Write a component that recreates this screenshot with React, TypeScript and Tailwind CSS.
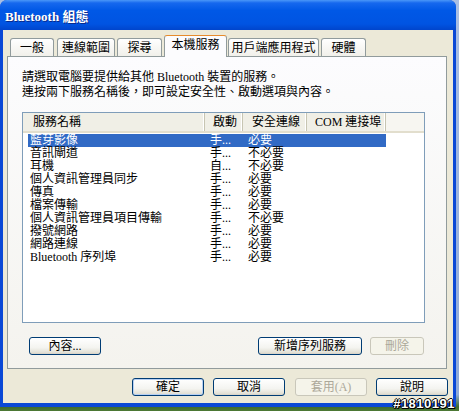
import React from "react";

const TABS = [
  { label: "一般", cls: "ml-[3px] w-[44px]" },
  { label: "連線範圍", cls: "ml-[3px] w-[58px]" },
  { label: "探尋", cls: "ml-[2px] w-[45px]" },
  { label: "本機服務", cls: "ml-[2px] w-[63px]", active: true },
  { label: "用戶端應用程式", cls: "ml-[1px] w-[91px]" },
  { label: "硬體", cls: "ml-[2px] w-[45px]" },
];

const SERVICES = [
  ["藍芽影像", "手...", "必要"],
  ["音訊閘道", "手...", "不必要"],
  ["耳機", "自...", "不必要"],
  ["個人資訊管理員同步", "手...", "必要"],
  ["傳真", "手...", "必要"],
  ["檔案傳輸", "手...", "必要"],
  ["個人資訊管理員項目傳輸", "手...", "不必要"],
  ["撥號網路", "手...", "必要"],
  ["網路連線", "手...", "必要"],
  ["Bluetooth 序列埠", "手...", "必要"],
];

const COLUMNS = [
  { label: "服務名稱", cls: "w-[182px] pl-[10px]" },
  { label: "啟動", cls: "w-[38px] pl-[8px]" },
  { label: "安全連線", cls: "w-[64px] pl-[9px]" },
  { label: "COM 連接埠", cls: "w-[79px] pl-[8px]" },
];

function XpButton({
  label,
  className = "",
  disabled = false,
  primary = false,
}: {
  label: string;
  className?: string;
  disabled?: boolean;
  primary?: boolean;
}) {
  if (disabled) {
    return (
      <div
        className={`h-[18px] rounded-[3px] border border-[#c9c7ba] bg-[#f5f4ea] flex items-center justify-center text-[12px] leading-none text-[#aca899] ${className}`}
      >
        {label}
      </div>
    );
  }
  return (
    <div
      className={`h-[18px] rounded-[3px] border border-[#003c74] bg-[linear-gradient(to_bottom,#ffffff_0%,#f4f4f0_60%,#e3e1d6_90%,#d6d0c5_100%)] flex items-center justify-center text-[12px] leading-none text-black ${
        primary ? "shadow-[inset_0_0_0_1px_#b7d0f3]" : ""
      } ${className}`}
    >
      {label}
    </div>
  );
}

export default function App() {
  return (
    <div className="relative w-[459px] h-[411px] overflow-hidden bg-[linear-gradient(to_bottom,#a9bfe4_0%,#8ea9d8_96%,#3f6a2d_99%,#4d7a35_100%)] font-['Liberation_Serif','Noto_Sans_CJK_TC',serif] text-[12px] text-black">
      {/* window */}
      <div className="w-[456px] h-[407px] rounded-t-[7px] bg-[#0a48d6] flex flex-col">
        {/* title bar */}
        <div className="h-[30px] rounded-t-[7px] bg-[linear-gradient(to_bottom,#4a97f8_0%,#1668ee_10%,#0058e6_35%,#0054e2_80%,#0045cc_100%)] flex items-center pl-[5px] pt-[3px]">
          <span className="text-white font-bold text-[13px] [text-shadow:1px_1px_0_#0a2a8c]">
            Bluetooth 組態
          </span>
        </div>

        {/* client area */}
        <div className="flex-1 mx-[3px] mb-[4px] bg-[#ece9d8] flex flex-col pt-[5px]">
          {/* tabs */}
          <div className="h-[21px] flex items-end pl-[4px]">
            {TABS.map((t) =>
              t.active ? (
                <div
                  key={t.label}
                  className={`relative z-10 -mb-px h-[22px] rounded-t-[3px] border border-b-0 border-[#919b9c] border-t-[#e68b2c] bg-[#fcfcfe] flex flex-col ${t.cls}`}
                >
                  <div className="h-[2px] bg-[#ffc73c]" />
                  <div className="flex-1 flex items-center justify-center pb-[3px]">
                    {t.label}
                  </div>
                </div>
              ) : (
                <div
                  key={t.label}
                  className={`h-[18px] rounded-t-[3px] border border-b-0 border-[#919b9c] bg-[linear-gradient(to_bottom,#ffffff,#f1f0ea)] flex items-center justify-center pt-[1px] ${t.cls}`}
                >
                  {t.label}
                </div>
              )
            )}
          </div>

          {/* panel */}
          <div className="ml-[4px] w-[440px] h-[313px] border border-[#919b9c] bg-[linear-gradient(to_bottom,#fcfcfe,#f4f3ee)] pl-[14px] pt-[13px] flex flex-col">
            <div className="leading-[15px]">
              請選取電腦要提供給其他 Bluetooth 裝置的服務。
            </div>
            <div className="leading-[15px]">
              連按兩下服務名稱後，即可設定安全性、啟動選項與內容。
            </div>

            {/* list view */}
            <div className="mt-[12px] w-[403px] h-[211px] border border-[#7f9db9] bg-white flex flex-col">
              <div className="h-[20px] flex bg-[#f0efe6] border-b-2 border-[#e2decd]">
                {COLUMNS.map((c) => (
                  <div
                    key={c.label}
                    className={`h-full flex items-center border-r border-[#c7c5b2] shadow-[inset_-1px_0_0_#ffffff] whitespace-nowrap ${c.cls}`}
                  >
                    {c.label}
                  </div>
                ))}
                <div className="flex-1 bg-[#f7f6f1]" />
              </div>
              <div className="pt-[1px]">
                {SERVICES.map(([name, start, secure], i) => (
                  <div
                    key={name}
                    className={`ml-[5px] w-[358px] h-[13px] flex items-center leading-[13px] whitespace-nowrap ${
                      i === 0 ? "bg-[#316ac5] text-white" : ""
                    }`}
                  >
                    <div className="w-[177px] pl-[2px]">{name}</div>
                    <div className="w-[38px] pl-[5px]">{start}</div>
                    <div className="w-[64px] pl-[5px]">{secure}</div>
                    <div className="w-[79px]" />
                  </div>
                ))}
              </div>
            </div>

            {/* panel buttons */}
            <div className="mt-[14px] w-[403px] flex justify-between pl-[7px] pr-[1px]">
              <XpButton label="內容..." className="w-[72px]" />
              <div className="flex gap-[8px]">
                <XpButton label="新增序列服務" className="w-[104px]" />
                <XpButton label="刪除" className="w-[54px]" disabled />
              </div>
            </div>
          </div>

          {/* dialog buttons */}
          <div className="mt-[9px] flex justify-end pr-[5px] gap-[9px]">
            <XpButton label="確定" className="w-[72px]" primary />
            <XpButton label="取消" className="w-[72px]" />
            <XpButton label="套用(A)" className="w-[72px] ml-[1px]" disabled />
            <XpButton label="說明" className="w-[72px]" />
          </div>
        </div>
      </div>

      {/* watermark */}
      <div className="absolute right-[4px] bottom-[1px] font-['Liberation_Sans',sans-serif] font-bold text-[13px] leading-[13px] tracking-[0.5px] text-white [text-shadow:1px_0_0_#000,-1px_0_0_#000,0_1px_0_#000,0_-1px_0_#000,1px_1px_0_#000]">
        #1810191
      </div>
    </div>
  );
}
